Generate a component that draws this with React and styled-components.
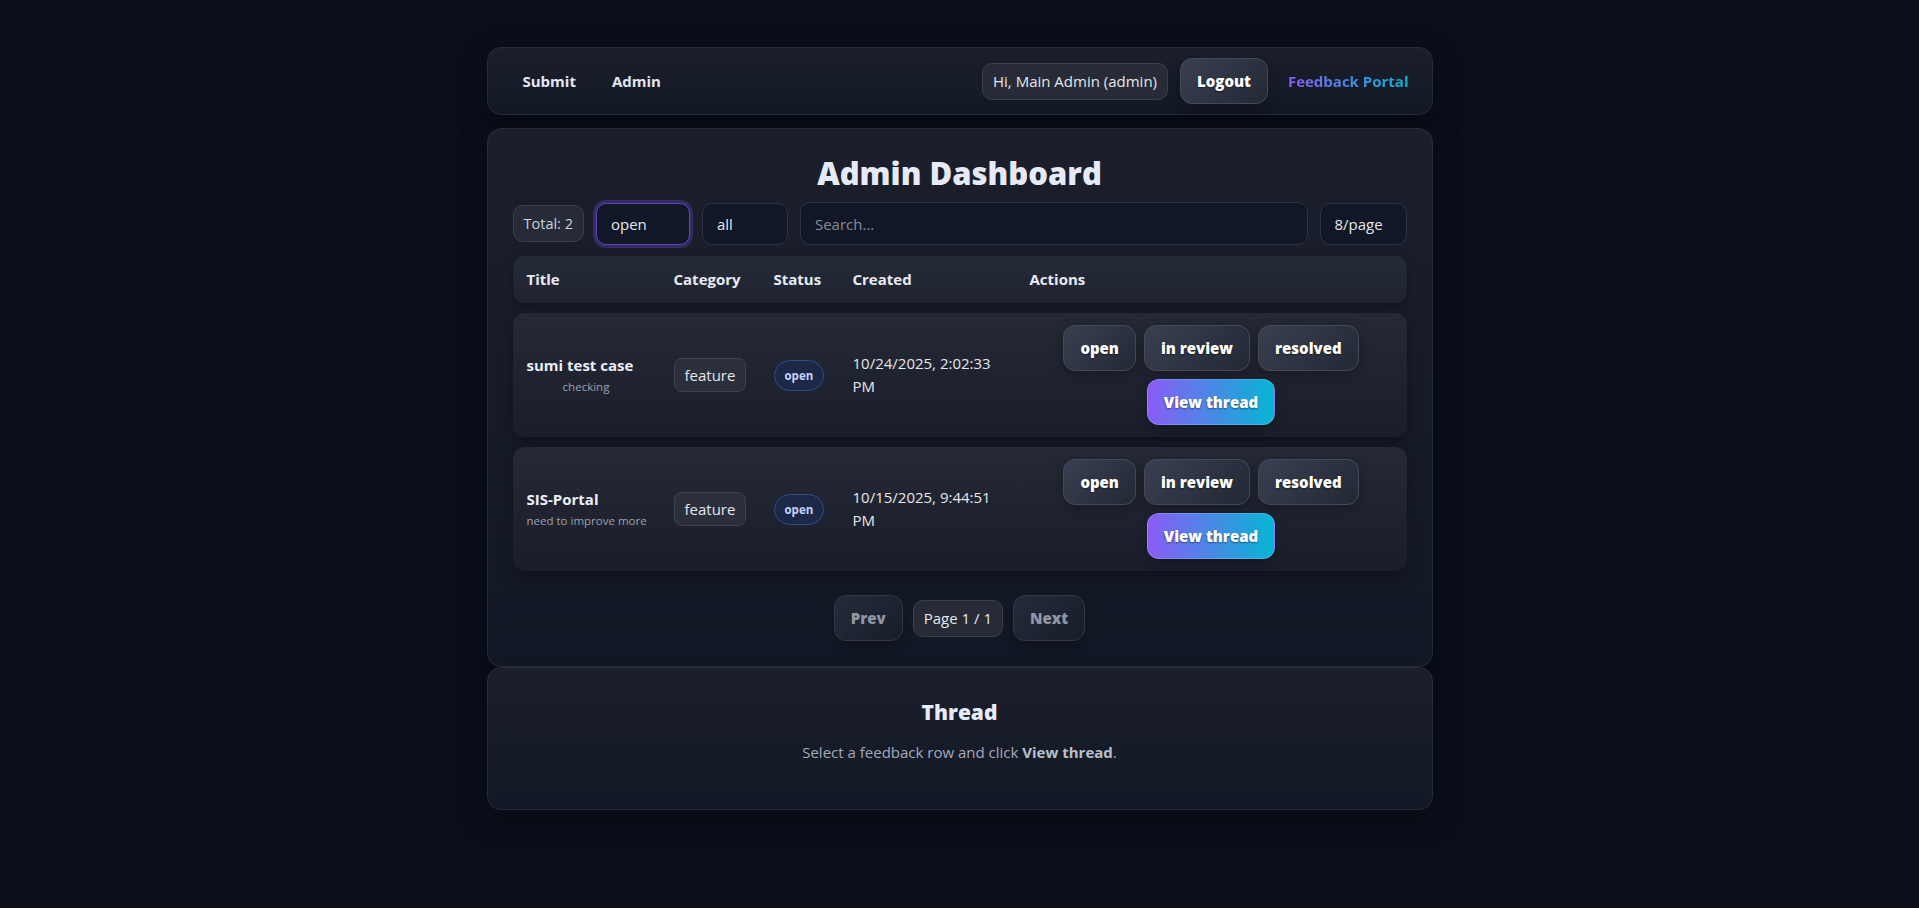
import React from 'react'
import styled, {createGlobalStyle, css} from 'styled-components'

const GlobalStyle = createGlobalStyle`
    html, body {
        margin: 0;
        padding: 0;
        background: #0a0f1a;
        color: #e5e7eb;
        font-family: "Open Sans", "Noto Sans", sans-serif;
    }
    * { box-sizing: border-box; }
`

const Page = styled.div`
    min-height: 908px;
    padding: 47px 0 60px;
    display: flex;
    justify-content: center;
`

const Shell = styled.div`
    width: 946px;
    display: flex;
    flex-direction: column;
`

const Card = styled.section`
    background: linear-gradient(180deg, #1b1f2b 0%, #131826 100%);
    border: 1px solid #272c39;
    border-radius: 14px;
    box-shadow: 0 10px 30px rgba(0, 0, 0, 0.35);
`

const NavBar = styled(Card)`
    display: flex;
    align-items: center;
    padding: 10px 23px;
`

const NavLinks = styled.nav`
    display: flex;
    gap: 12px;
`

const NavLink = styled.a`
    padding: 8px 12px;
    font-size: 15px;
    font-weight: 700;
    color: #e3e6f2;
    text-decoration: none;
`

const NavRight = styled.div`
    margin-left: auto;
    display: flex;
    align-items: center;
    gap: 12px;
`

const Chip = styled.span`
    display: inline-flex;
    align-items: center;
    padding: 7px 10px;
    line-height: 21px;
    font-size: ${p => p.$size || 15}px;
    color: ${p => p.$muted ? '#cbd2dc' : '#e5e7eb'};
    background: #262b37;
    border: 1px solid #3a404d;
    border-radius: 10px;
    white-space: nowrap;
`

const Button = styled.button`
    font-family: inherit;
    font-size: 15px;
    font-weight: 800;
    line-height: 22px;
    padding: 11px 16px;
    color: #ffffff;
    border-radius: 12px;
    border: 1px solid #444a58;
    background: linear-gradient(135deg, #3a4051 0%, #232835 100%);
    text-shadow: 0 1px 2px rgba(0, 0, 0, 0.45);
    box-shadow: 0 4px 12px rgba(0, 0, 0, 0.25);
    cursor: pointer;
    white-space: nowrap;

    ${p => p.$primary && css`
        border-color: rgba(140, 200, 255, 0.35);
        background: linear-gradient(90deg, #8b5cf6 0%, #06b6d4 100%);
    `}

    ${p => p.disabled && css`
        color: #8f96a3;
        border-color: #313745;
        background: linear-gradient(135deg, #252b3a 0%, #181d29 100%);
        text-shadow: none;
        cursor: default;
    `}
`

const Brand = styled.span`
    margin-left: 8px;
    font-size: 15px;
    font-weight: 700;
    background: linear-gradient(90deg, #8b5cf6 0%, #06b6d4 100%);
    -webkit-background-clip: text;
    background-clip: text;
    color: transparent;
`

const Main = styled(Card)`
    margin-top: 13px;
    padding: 24px 25px 25px;
`

const Title = styled.h2`
    margin: 0 0 9px;
    text-align: center;
    font-size: 31px;
    line-height: 40px;
    font-weight: 800;
    color: #e6e9f6;
`

const Toolbar = styled.div`
    display: flex;
    align-items: center;
    gap: 12px;
`

const fieldBase = css`
    height: 42px;
    font-family: inherit;
    font-size: 15px;
    color: #e5e7eb;
    background: #111726;
    border: 1px solid #2d3343;
    border-radius: 10px;
    padding: 0 14px;
    outline: none;
`

const Select = styled.select`
    ${fieldBase};
    appearance: none;
    -webkit-appearance: none;
    width: ${p => p.$width}px;

    ${p => p.$focused && css`
        border-color: #5d46bd;
        box-shadow: 0 0 0 3px rgba(88, 64, 180, 0.4);
    `}
`

const Search = styled.input`
    ${fieldBase};
    height: 43px;
    flex: 1;

    &::placeholder { color: #858c9b; }
`

const cols = '147px 100px 79px 177px 1fr'

const TableHead = styled.div`
    margin-top: 11px;
    display: grid;
    grid-template-columns: ${cols};
    align-items: center;
    height: 47px;
    background: linear-gradient(180deg, #252a37 0%, #1f2430 100%);
    border-radius: 12px;
    box-shadow: 0 4px 12px rgba(0, 0, 0, 0.25);
`

const HeadCell = styled.div`
    padding: 0 14px 2px;
    font-size: 15px;
    font-weight: 700;
    color: #e8eaf3;
`

const Row = styled.div`
    margin-top: 10px;
    display: grid;
    grid-template-columns: ${cols};
    align-items: center;
    padding: 12px 0;
    background: linear-gradient(180deg, #242935 0%, #1a1e2a 100%);
    border-radius: 12px;
    box-shadow: 0 6px 16px rgba(0, 0, 0, 0.3);
`

const Cell = styled.div`
    padding: 0 14px;
    font-size: 15px;
    line-height: 23px;
    color: #e5e7eb;
`

const RowTitle = styled.div`
    font-size: 15px;
    font-weight: 700;
    line-height: 20px;
    color: #eceef6;
`

const RowDesc = styled.div`
    margin-top: 3px;
    font-size: 11.5px;
    line-height: 18px;
    color: #9aa2b1;
    text-align: center;
    white-space: nowrap;
`

const Tag = styled.span`
    display: inline-block;
    padding: 6px 10px;
    line-height: 20px;
    font-size: 15px;
    color: #e5e7eb;
    background: #2a2f3b;
    border: 1px solid #3c4250;
    border-radius: 8px;
`

const Badge = styled.span`
    display: inline-block;
    padding: 0 10px;
    line-height: 29px;
    font-size: 11.5px;
    font-weight: 700;
    color: #c3d4ff;
    background: #1c2846;
    border: 1px solid #2f4c88;
    border-radius: 999px;
`

const Actions = styled.div`
    padding: 0 14px;
    display: flex;
    flex-wrap: wrap;
    justify-content: center;
    gap: 8px;
`

const Pager = styled.div`
    margin-top: 24px;
    display: flex;
    justify-content: center;
    align-items: center;
    gap: 10px;
`

const Thread = styled(Card)`
    padding: 24px;
    text-align: center;
`

const ThreadTitle = styled.h3`
    margin: 6px 0 16px;
    font-size: 21px;
    line-height: 28px;
    font-weight: 800;
    color: #e6e9f6;
`

const Hint = styled.p`
    margin: 0 0 22px;
    font-size: 15px;
    line-height: 21px;
    color: #a3aab8;

    b { color: #b9c0cd; font-weight: 700; }
`

const feedback = [
    {id: 1, title: 'sumi test case', desc: 'checking', category: 'feature', status: 'open', created: '10/24/2025, 2:02:33 PM'},
    {id: 2, title: 'SIS-Portal', desc: 'need to improve more', category: 'feature', status: 'open', created: '10/15/2025, 9:44:51 PM'},
]

function FeedbackRow({item}) {
    return (
        <Row>
            <Cell>
                <RowTitle>{item.title}</RowTitle>
                <RowDesc>{item.desc}</RowDesc>
            </Cell>
            <Cell><Tag>{item.category}</Tag></Cell>
            <Cell><Badge>{item.status}</Badge></Cell>
            <Cell>{item.created}</Cell>
            <Actions>
                <Button>open</Button>
                <Button>in review</Button>
                <Button>resolved</Button>
                <Button $primary>View thread</Button>
            </Actions>
        </Row>
    )
}

export default function App() {
    return (
        <>
            <GlobalStyle/>
            <Page>
                <Shell>
                    <NavBar>
                        <NavLinks>
                            <NavLink href="#">Submit</NavLink>
                            <NavLink href="#">Admin</NavLink>
                        </NavLinks>
                        <NavRight>
                            <Chip>Hi, Main Admin (admin)</Chip>
                            <Button>Logout</Button>
                            <Brand>Feedback Portal</Brand>
                        </NavRight>
                    </NavBar>

                    <Main>
                        <Title>Admin Dashboard</Title>
                        <Toolbar>
                            <Chip $size={14.5} $muted>Total: 2</Chip>
                            <Select $width={94} $focused defaultValue="open">
                                <option value="all">all</option>
                                <option value="open">open</option>
                                <option value="in_review">in review</option>
                                <option value="resolved">resolved</option>
                            </Select>
                            <Select $width={86} defaultValue="all">
                                <option value="all">all</option>
                                <option value="feature">feature</option>
                                <option value="bug">bug</option>
                            </Select>
                            <Search placeholder="Search..."/>
                            <Select $width={87} defaultValue="8">
                                <option value="8">8/page</option>
                                <option value="16">16/page</option>
                            </Select>
                        </Toolbar>

                        <TableHead>
                            <HeadCell>Title</HeadCell>
                            <HeadCell>Category</HeadCell>
                            <HeadCell>Status</HeadCell>
                            <HeadCell>Created</HeadCell>
                            <HeadCell>Actions</HeadCell>
                        </TableHead>
                        {feedback.map(item => <FeedbackRow key={item.id} item={item}/>)}

                        <Pager>
                            <Button disabled>Prev</Button>
                            <Chip>Page 1 / 1</Chip>
                            <Button disabled>Next</Button>
                        </Pager>
                    </Main>

                    <Thread>
                        <ThreadTitle>Thread</ThreadTitle>
                        <Hint>Select a feedback row and click <b>View thread</b>.</Hint>
                    </Thread>
                </Shell>
            </Page>
        </>
    )
}
